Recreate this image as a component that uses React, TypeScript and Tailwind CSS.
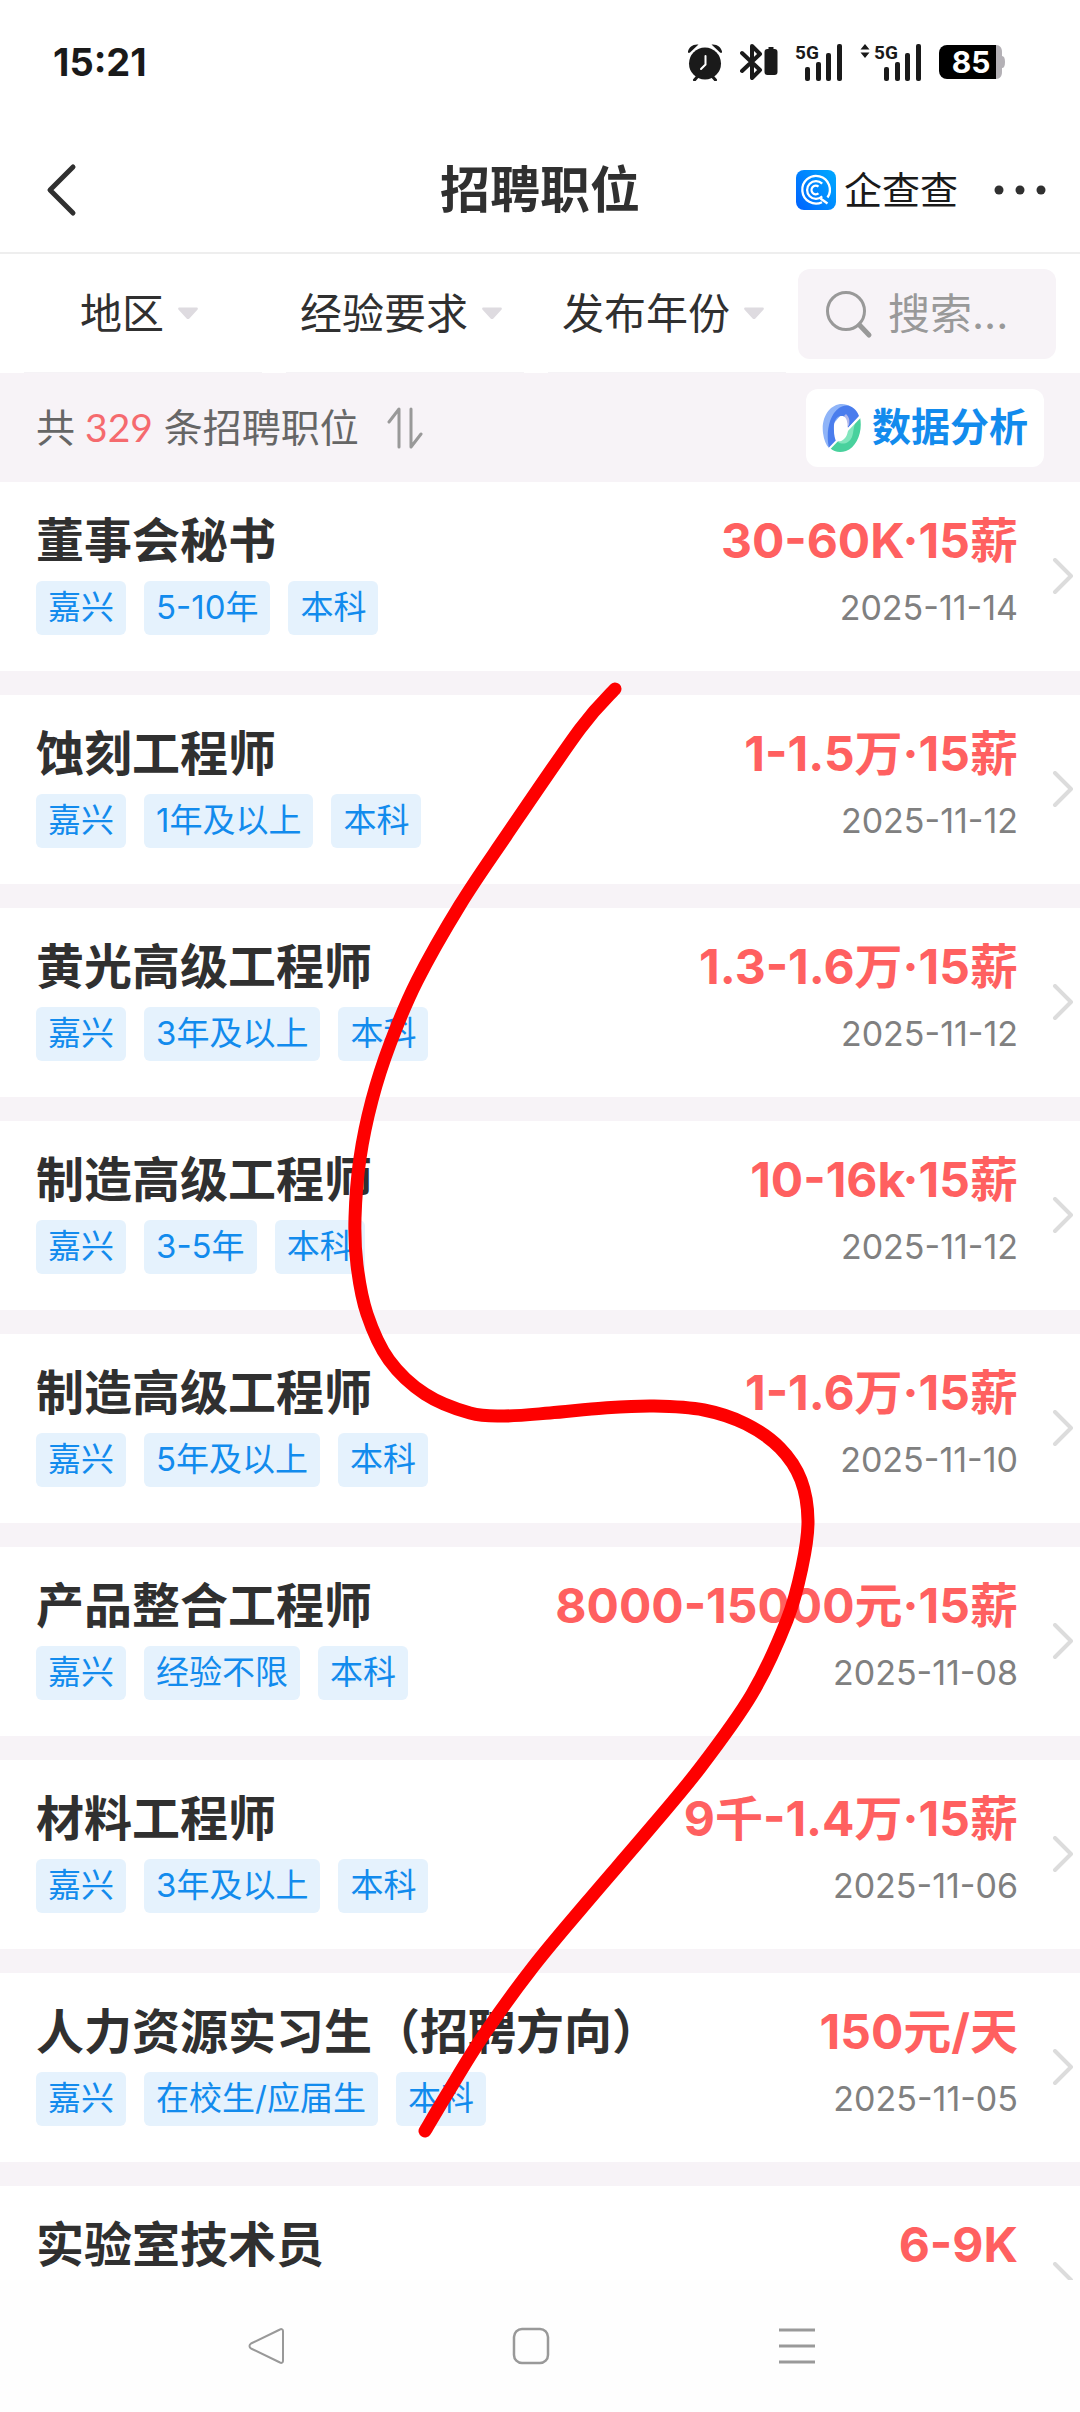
import { useState } from "react";

type Job = { title: string; tags: string[]; salary: string; date?: string };

const jobs: Job[] = [
  { title: "董事会秘书", tags: ["嘉兴", "5-10年", "本科"], salary: "30-60K·15薪", date: "2025-11-14" },
  { title: "蚀刻工程师", tags: ["嘉兴", "1年及以上", "本科"], salary: "1-1.5万·15薪", date: "2025-11-12" },
  { title: "黄光高级工程师", tags: ["嘉兴", "3年及以上", "本科"], salary: "1.3-1.6万·15薪", date: "2025-11-12" },
  { title: "制造高级工程师", tags: ["嘉兴", "3-5年", "本科"], salary: "10-16k·15薪", date: "2025-11-12" },
  { title: "制造高级工程师", tags: ["嘉兴", "5年及以上", "本科"], salary: "1-1.6万·15薪", date: "2025-11-10" },
  { title: "产品整合工程师", tags: ["嘉兴", "经验不限", "本科"], salary: "8000-15000元·15薪", date: "2025-11-08" },
  { title: "材料工程师", tags: ["嘉兴", "3年及以上", "本科"], salary: "9千-1.4万·15薪", date: "2025-11-06" },
  { title: "人力资源实习生（招聘方向）", tags: ["嘉兴", "在校生/应届生", "本科"], salary: "150元/天", date: "2025-11-05" },
  { title: "实验室技术员", tags: [], salary: "6-9K" },
];

const filters = ["地区", "经验要求", "发布年份"];

// Points of the hand-drawn red stroke, joined by a Catmull-Rom spline.
const strokePoints: [number, number][] = [
  [615, 689], [580, 729], [506, 836], [460, 905], [417, 981], [390, 1044], [372, 1100], [360, 1158],
  [355, 1218], [357, 1265], [367, 1314], [389, 1360], [425, 1394], [470, 1413], [504, 1416], [550, 1413],
  [604, 1408], [654, 1406], [704, 1410], [746, 1424], [780, 1448], [801, 1480], [808, 1521], [802, 1567],
  [787, 1620], [752, 1694], [700, 1768], [647, 1832], [587, 1902], [533, 1967], [483, 2036], [447, 2094],
  [425, 2131],
];

function smoothPath(p: [number, number][]) {
  let d = `M${p[0][0]} ${p[0][1]}`;
  for (let i = 0; i < p.length - 1; i++) {
    const a = p[Math.max(i - 1, 0)];
    const b = p[i];
    const c = p[i + 1];
    const e = p[Math.min(i + 2, p.length - 1)];
    d += ` C${b[0] + (c[0] - a[0]) / 6} ${b[1] + (c[1] - a[1]) / 6} ${c[0] - (e[0] - b[0]) / 6} ${c[1] - (e[1] - b[1]) / 6} ${c[0]} ${c[1]}`;
  }
  return d;
}

function AlarmIcon() {
  return (
    <svg width="36" height="38" viewBox="0 0 36 38" aria-label="闹钟">
      <path d="M11 33 7.500 37M25 33l3.500 4" stroke="#1a1a1a" strokeWidth="3" strokeLinecap="round" />
      <path d="M1 8.500C2 4 6 .8 11.500 1.500L3 9.500c-1 .8-2.300.5-2-1zM35 8.500C34 4 30 .8 24.500 1.500L33 9.500c1 .8 2.300.5 2-1z" fill="#1a1a1a" />
      <circle cx="18" cy="20.500" r="16" fill="#1a1a1a" />
      <path d="M18.500 13v8.500L14 26" stroke="#fff" strokeWidth="2" fill="none" strokeLinecap="round" />
    </svg>
  );
}

function BluetoothIcon() {
  return (
    <svg width="38" height="38" viewBox="0 0 38 38" aria-label="蓝牙">
      <path d="M2 10 20 27l-8 8V3l8 8L2 28" fill="none" stroke="#1a1a1a" strokeWidth="4" strokeLinejoin="round" strokeLinecap="round" />
      <path d="M28.500 4h5v2h1a3 3 0 0 1 3 3v20a3 3 0 0 1-3 3h-7a3 3 0 0 1-3-3V9a3 3 0 0 1 3-3h1z" fill="#1a1a1a" />
    </svg>
  );
}

function SignalIcon({ arrows }: { arrows?: boolean }) {
  return (
    <span className="flex items-start gap-1">
      {arrows && (
        <svg width="10" height="38" viewBox="0 0 10 38">
          <path d="M5 1 9.500 6.500h-9zM5 15 .5 9.500h9z" fill="#1a1a1a" />
        </svg>
      )}
      <svg width="48" height="38" viewBox="0 0 48 38" overflow="visible" aria-label="5G信号">
        <text x="0" y="16" fontSize="19" fontWeight="700" fontFamily="Roboto, sans-serif" fill="#1a1a1a">5G</text>
        <rect x="10" y="24" width="5" height="14" rx="2" fill="#1a1a1a" />
        <rect x="21" y="19" width="5" height="19" rx="2" fill="#1a1a1a" />
        <rect x="31" y="10" width="5" height="28" rx="2" fill="#1a1a1a" />
        <rect x="42" y="1" width="5" height="37" rx="2" fill="#1a1a1a" />
      </svg>
    </span>
  );
}

function BatteryIcon() {
  return (
    <svg width="67" height="34" viewBox="0 0 67 34" aria-label="电量85%">
      <path d="M56 0h1c4 0 6 3 6 7v4c2 0 3 2 3 6s-1 6-3 6v4c0 4-2 7-6 7h-1z" fill="#b4b1b6" />
      <path d="M8 0h49v34H8a8 8 0 0 1-8-8V8a8 8 0 0 1 8-8z" fill="#000" />
      <text x="32" y="28" textAnchor="middle" fontSize="30" fontWeight="700" fontFamily="Inter, sans-serif" fill="#fff">85</text>
    </svg>
  );
}

function BrandIcon() {
  return (
    <svg width="40" height="40" viewBox="0 0 40 40">
      <defs>
        <linearGradient id="brand" x1="0" y1="1" x2="1" y2="0.300">
          <stop offset="0" stopColor="#0062ff" />
          <stop offset="1" stopColor="#00a2ff" />
        </linearGradient>
      </defs>
      <rect width="40" height="40" rx="8" fill="url(#brand)" />
      <g fill="none" stroke="#fff" strokeWidth="2.300">
        <path d="M31.500 27.500A13.800 13.800 0 1 0 26 32.200" />
        <path d="m24.500 28.500 7 5" />
        <path d="M26.200 13.600A8.900 8.900 0 1 0 26.200 26.400" />
        <path d="M22.500 16.600A4.300 4.300 0 1 0 22.500 23.400" />
      </g>
    </svg>
  );
}

function ChartIcon() {
  return (
    <svg width="40" height="50" viewBox="0 0 40 50">
      <path d="M1 30C-1 14 8 1 20 1c3 0 6 1 8 2L12 20v22l-5 3C4 42 2 37 1 30z" fill="#8fb4f8" />
      <path d="M7 45C4 32 6 13 17 5c8-6 17-1 20 8L26 25c0-7-3-12-7-12-5 0-8 7-7 15 0 4 1 8 2 10z" fill="#4a7ded" />
      <path d="M24 11c3 3 4 6 3 11l-2 3c0-6-1-9-3-12z" fill="#b3b9ea" />
      <path d="M38 14c3 14-3 30-14 34-6 2-12 1-16-3l7-7c6 3 12-3 13-14z" fill="#49d19d" />
      <path d="M35 17 26 26c0 7-4 12-10 13 4 3 11 2 14-5 2-6 1-11 5-17z" fill="#82e6bd" />
      <path d="M39 13 7 46" stroke="#fff" strokeWidth="2" />
      <ellipse cx="19" cy="25" rx="6.500" ry="12" transform="rotate(8 19 25)" fill="#fff" />
    </svg>
  );
}

function JobRow({ job }: { job: Job }) {
  return (
    <li className="shrink-0 bg-white">
      <a href="#job" className="flex items-center gap-[34px] pr-1.5 pl-9">
        <div className="flex min-w-0 flex-1 flex-col gap-[11px] pt-[29px] pb-9">
          <div className="flex items-center justify-between text-[48px] leading-[59px] font-bold whitespace-nowrap">
            <h2 className="text-[#303030]">{job.title}</h2>
            <span className="text-[#ff6060]">{job.salary}</span>
          </div>
          <div className="flex min-h-[54px] items-center justify-between">
            <div className="flex gap-[18px]">
              {job.tags.map((tag) => (
                <span key={tag} className="rounded-md bg-[#e5f2fd] px-3 pt-px pb-[3px] text-[33px] leading-[50px] whitespace-nowrap text-[#128bed]">
                  {tag}
                </span>
              ))}
            </div>
            {job.date && <time className="text-[34px] leading-[50px] text-[#808080]">{job.date}</time>}
          </div>
        </div>
        <svg width="22" height="38" viewBox="0 0 22 38" className="shrink-0">
          <path d="M3 2 19 18 3 34" fill="none" stroke="#dcdcdc" strokeWidth="4" strokeLinecap="round" strokeLinejoin="round" />
        </svg>
      </a>
    </li>
  );
}

export default function App() {
  const [keyword, setKeyword] = useState("");

  return (
    <div className="relative flex h-screen flex-col overflow-hidden bg-white font-['Inter','Noto_Sans_CJK_SC',sans-serif] text-[#303030]">
      <div className="flex h-[124px] shrink-0 items-center justify-between pr-[74px] pl-[53px]">
        <time className="text-[38px] font-bold text-[#1a1a1a]">15:21</time>
        <div className="flex items-center gap-[17px]">
          <AlarmIcon />
          <BluetoothIcon />
          <SignalIcon />
          <SignalIcon arrows />
          <BatteryIcon />
        </div>
      </div>

      <header className="grid h-[130px] shrink-0 grid-cols-[1fr_auto_1fr] items-center border-b-2 border-[#eeeeee] px-[34px] pt-[3px]">
        <button aria-label="返回" className="justify-self-start pl-2.5">
          <svg width="34" height="54" viewBox="0 0 34 54">
            <path d="M29 4 6 27l23 23" fill="none" stroke="#303030" strokeWidth="5" strokeLinecap="round" strokeLinejoin="round" />
          </svg>
        </button>
        <h1 className="text-[50px] leading-[60px] font-bold">招聘职位</h1>
        <div className="flex items-center justify-self-end">
          <a href="#home" className="flex items-center gap-2 text-[38px] leading-[50px] text-[#1a1a1a]">
            <BrandIcon />
            企查查
          </a>
          <button aria-label="更多" className="ml-9">
            <svg width="52" height="12" viewBox="0 0 52 12" fill="#303030">
              <circle cx="5" cy="6" r="4.500" />
              <circle cx="26" cy="6" r="4.500" />
              <circle cx="47" cy="6" r="4.500" />
            </svg>
          </button>
        </div>
      </header>

      <div className="flex h-[119px] shrink-0 items-stretch pr-6 pl-3">
        {filters.map((name) => (
          <button key={name} className="mx-3 flex flex-1 items-center justify-center gap-[14px] border-b border-[#f5f3f6] pr-2 text-[42px] whitespace-nowrap">
            {name}
            <svg width="20" height="13" viewBox="0 0 20 13">
              <path d="M1.500.500h17c1.300 0 1.800 1.300.9 2.200l-8 8.700c-.8.900-2 .9-2.800 0l-8-8.700C-.300 1.800.200.500 1.500.500z" fill="#dedbe0" />
            </svg>
          </button>
        ))}
        <label className="flex h-[90px] w-[258px] items-center gap-3 self-center rounded-xl bg-[#f7f3f7] pr-2 pl-7">
          <svg width="50" height="50" viewBox="0 0 50 50" className="shrink-0">
            <circle cx="20" cy="22" r="18.500" fill="none" stroke="#999" strokeWidth="3" />
            <path d="m33.500 36 9.500 10" stroke="#999" strokeWidth="5" strokeLinecap="round" />
          </svg>
          <input
            aria-label="搜索"
            value={keyword}
            onChange={(e) => setKeyword(e.target.value)}
            placeholder="搜索..."
            className="w-full min-w-0 bg-transparent text-[42px] leading-[60px] outline-none placeholder:text-[#999999]"
          />
        </label>
      </div>

      <div className="flex h-[109px] shrink-0 items-center justify-between bg-[#f7f3f7] px-9">
        <div className="flex items-center gap-7">
          <p className="text-[39px] text-[#666666]">
            共<span className="ml-2.5 font-[Lato] text-[#f56a6e]">329</span> 条招聘职位
          </p>
          <button aria-label="排序">
            <svg width="36" height="42" viewBox="0 0 36 42" fill="none" stroke="#999" strokeWidth="3" strokeLinecap="round" strokeLinejoin="round">
              <path d="M12 40V2L2 15M24 2v38l10-13" />
            </svg>
          </button>
        </div>
        <button className="flex h-[78px] items-center gap-[10px] rounded-xl bg-white px-4 text-[39px] font-bold text-[#128bed]">
          <ChartIcon />
          数据分析
        </button>
      </div>

      <ul className="flex min-h-0 flex-1 flex-col gap-6 overflow-y-auto bg-[#f7f3f7] [scrollbar-width:none]">
        {jobs.map((job, i) => (
          <JobRow key={i} job={job} />
        ))}
      </ul>

      <nav className="flex h-[132px] shrink-0 items-center justify-center bg-[#fefefe] pr-[18px]">
        <div className="grid w-3/4 grid-cols-3 justify-items-center">
          <button aria-label="后退">
            <svg width="38" height="38" viewBox="0 0 38 38">
              <path d="M33 2.500c1.500-1 3 0 3 1.500v30c0 1.500-1.500 2.500-3 1.500L4 21.500c-2-1.200-2-3.800 0-5z" fill="none" stroke="#999" strokeWidth="2" strokeLinejoin="round" />
            </svg>
          </button>
          <button aria-label="主屏幕">
            <svg width="38" height="38" viewBox="0 0 38 38">
              <rect x="2" y="2" width="34" height="34" rx="8" fill="none" stroke="#999" strokeWidth="2.500" />
            </svg>
          </button>
          <button aria-label="菜单">
            <svg width="38" height="38" viewBox="0 0 38 38">
              <path d="M1 3h36M1 19h36M1 35h36" stroke="#999" strokeWidth="3" />
            </svg>
          </button>
        </div>
      </nav>

      <svg viewBox="0 0 1080 2412" className="pointer-events-none absolute inset-x-0 top-0 w-full" fill="none">
        <path d={smoothPath(strokePoints)} stroke="#fe0000" strokeWidth="13" strokeLinecap="round" strokeLinejoin="round" />
      </svg>
    </div>
  );
}
